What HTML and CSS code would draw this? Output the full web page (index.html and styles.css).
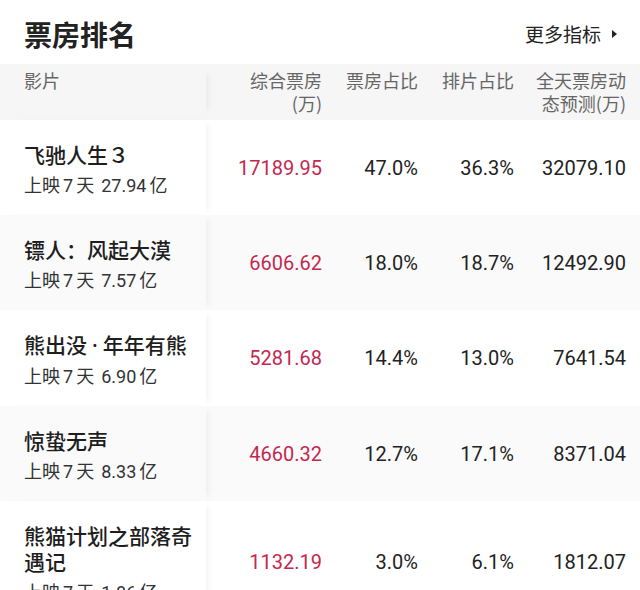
FILE: index.html
```html
<!DOCTYPE html>
<html lang="zh-CN">
<head>
<meta charset="utf-8">
<title>票房排名</title>
<link rel="stylesheet" href="styles.css">
</head>
<body>
<div class="page">
  <div class="top">
    <h1 class="title">票房排名</h1>
    <div class="more">更多指标<svg class="arrow" width="7" height="10" viewBox="0 0 7 10"><path d="M1 1 L6 5 L1 9 Z" fill="#222"/></svg></div>
  </div>
  <div class="table">
    <div class="row head">
      <div class="cell name">影片</div>
      <div class="cell num">综合票房<br>(万)</div>
      <div class="cell num">票房占比</div>
      <div class="cell num">排片占比</div>
      <div class="cell num">全天票房动<br>态预测(万)</div>
    </div>
    <div class="row">
      <div class="cell name"><div class="film">飞驰人生３</div><div class="sub">上映<span class="d">7</span>天 <span class="d">27.94</span>亿</div></div>
      <div class="cell num v red">17189.95</div>
      <div class="cell num v">47.0%</div>
      <div class="cell num v">36.3%</div>
      <div class="cell num v">32079.10</div>
    </div>
    <div class="row alt">
      <div class="cell name"><div class="film">镖人：风起大漠</div><div class="sub">上映<span class="d">7</span>天 <span class="d">7.57</span>亿</div></div>
      <div class="cell num v red">6606.62</div>
      <div class="cell num v">18.0%</div>
      <div class="cell num v">18.7%</div>
      <div class="cell num v">12492.90</div>
    </div>
    <div class="row">
      <div class="cell name"><div class="film nowrap">熊出没<span class="dot">·</span>年年有熊</div><div class="sub">上映<span class="d">7</span>天 <span class="d">6.90</span>亿</div></div>
      <div class="cell num v red">5281.68</div>
      <div class="cell num v">14.4%</div>
      <div class="cell num v">13.0%</div>
      <div class="cell num v">7641.54</div>
    </div>
    <div class="row alt">
      <div class="cell name"><div class="film">惊蛰无声</div><div class="sub">上映<span class="d">7</span>天 <span class="d">8.33</span>亿</div></div>
      <div class="cell num v red">4660.32</div>
      <div class="cell num v">12.7%</div>
      <div class="cell num v">17.1%</div>
      <div class="cell num v">8371.04</div>
    </div>
    <div class="row">
      <div class="cell name"><div class="film">熊猫计划之部落奇遇记</div><div class="sub">上映<span class="d">7</span>天 <span class="d">1.86</span>亿</div></div>
      <div class="cell num v red">1132.19</div>
      <div class="cell num v">3.0%</div>
      <div class="cell num v">6.1%</div>
      <div class="cell num v">1812.07</div>
    </div>
  </div>
</div>
</body>
</html>
```

FILE: styles.css
```css
html, body {
  margin: 0;
  padding: 0;
  background: #fff;
}
body {
  font-family: "Noto Sans CJK SC", "Noto Sans", sans-serif;
  color: #222;
  overflow: hidden;
}
.page {
  width: 640px;
}
.top {
  height: 64px;
  display: flex;
  align-items: center;
  justify-content: space-between;
  padding: 0 22px 0 24px;
}
.title {
  margin: 0;
  font-size: 28px;
  font-weight: 700;
  line-height: 36px;
  color: #222;
  position: relative;
  top: 2px;
}
.more {
  font-size: 19px;
  line-height: 26px;
  color: #222;
  display: flex;
  align-items: center;
  gap: 10px;
  position: relative;
  top: 2px;
}
.arrow {
  display: block;
}
.table {
  display: flex;
  flex-direction: column;
}
.row {
  display: grid;
  grid-template-columns: 206px 116px 96px 96px 112px;
  align-items: center;
  background: #fff;
}
.row.alt {
  background: #fafafa;
}
.row.head {
  background: #f6f6f6;
  align-items: start;
  padding: 5px 0 5px;
  font-size: 18px;
  line-height: 23px;
  color: #666;
}
.cell.name {
  align-self: stretch;
  padding-left: 24px;
  background: inherit;
  box-shadow: 6px 0 8px -5px rgba(0, 0, 0, 0.07);
  position: relative;
  z-index: 1;
}
.row:not(.head) .cell.name {
  padding-top: 21px;
  padding-bottom: 16px;
  padding-right: 8px;
}
.cell.num {
  text-align: right;
}
.film {
  font-size: 21px;
  line-height: 26px;
  font-weight: 500;
  color: #1e1e1e;
  margin-bottom: 4px;
}
.nowrap {
  white-space: nowrap;
}
.dot {
  font-family: "Noto Sans", sans-serif;
  margin: 0 5px;
}
.sub {
  font-size: 18px;
  line-height: 26px;
  color: #333;
}
.d {
  font-family: Roboto, "Noto Sans", sans-serif;
  margin: 0 3px;
}
.v {
  font-family: Roboto, "Noto Sans", sans-serif;
  font-size: 20px;
  line-height: 26px;
  color: #222;
}
.red {
  color: #c4284f;
}
```
